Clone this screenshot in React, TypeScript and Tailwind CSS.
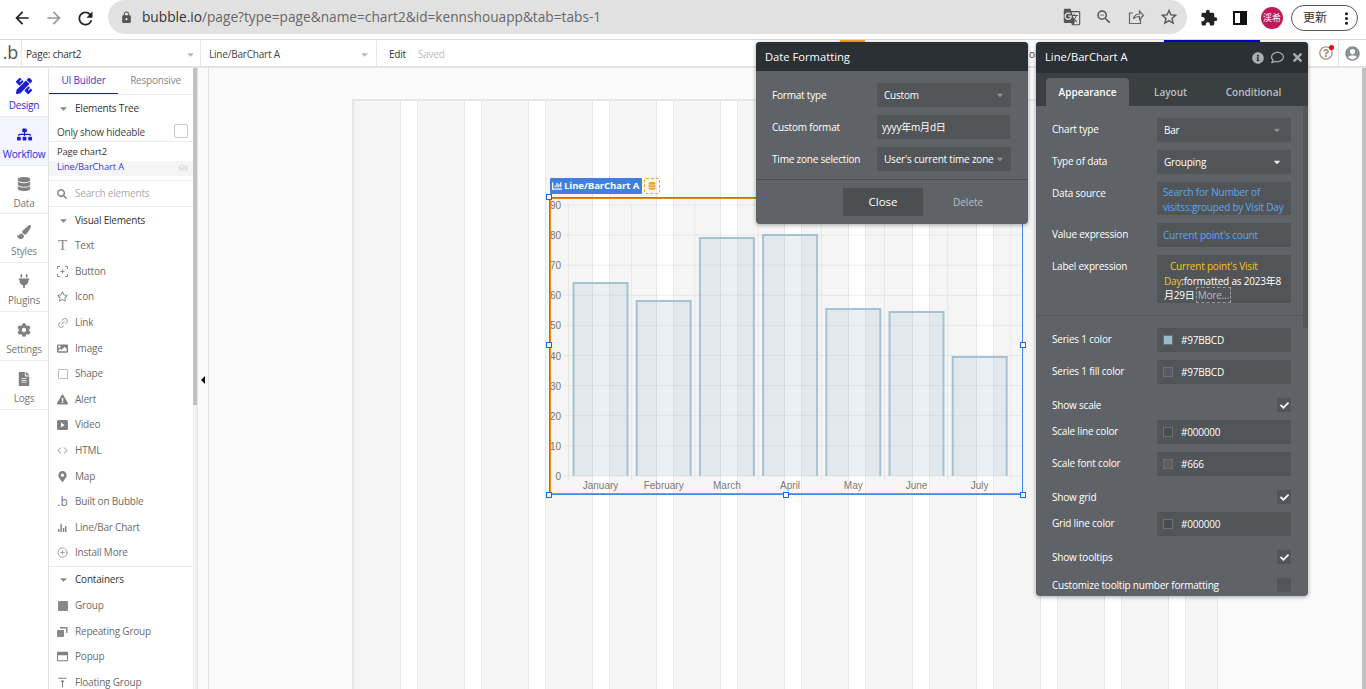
import React from 'react'
import {
  FaPencilRuler, FaSitemap, FaDatabase, FaPaintBrush, FaPlug, FaCog, FaFileAlt, FaCaretDown, FaSearch, FaEye,
  FaRegStar, FaImage, FaExclamationTriangle, FaMapMarkerAlt, FaInfoCircle, FaRegComment, FaTimes,
  FaCheck, FaRegQuestionCircle, FaUserCircle, FaChartBar, FaRegWindowMaximize,
} from 'react-icons/fa'
import { MdArrowBack, MdArrowForward, MdRefresh, MdLock, MdExtension, MdMoreVert, MdZoomOut, MdStarBorder, MdGTranslate, MdVerticalAlignTop } from 'react-icons/md'
import { Link2, CirclePlus, Code } from 'lucide-react'

const SANS = "font-['Open_Sans','Noto_Sans_CJK_JP',sans-serif]"

const navItems = [
  { label: 'Design', icon: <FaPencilRuler size={16} />, active: 'design' },
  { label: 'Workflow', icon: <FaSitemap size={15} />, active: 'workflow' },
  { label: 'Data', icon: <FaDatabase size={14} /> },
  { label: 'Styles', icon: <FaPaintBrush size={14} /> },
  { label: 'Plugins', icon: <FaPlug size={14} /> },
  { label: 'Settings', icon: <FaCog size={14} /> },
  { label: 'Logs', icon: <FaFileAlt size={14} /> },
]

function ButtonGlyph() {
  return (
    <svg width="11" height="11" viewBox="0 0 11 11" fill="none" stroke="#888" strokeWidth="1">
      <path d="M0.5 3V0.5H3M8 0.5h2.5V3M10.5 8v2.5H8M3 10.5H0.5V8M5.5 3.5v4M3.5 5.5h4" />
    </svg>
  )
}

function RepeatGlyph() {
  return (
    <svg width="11" height="11" viewBox="0 0 11 11" fill="#888">
      <rect x="0" y="4" width="7" height="7" rx="1" />
      <path d="M3 2.5V1h7.5v6H9V2.5z" />
    </svg>
  )
}

function VideoGlyph() {
  return (
    <svg width="11" height="10" viewBox="0 0 11 10">
      <rect width="11" height="10" rx="1.5" fill="#808080" />
      <path d="M4 2.5v5l3.500-2.500z" fill="white" />
    </svg>
  )
}

function TinyBars() {
  return (
    <svg width="9" height="9" viewBox="0 0 9 9" fill="#888">
      <rect x="0" y="6" width="1.5" height="3" />
      <rect x="2.4" y="1" width="1.5" height="8" />
      <rect x="4.8" y="5" width="1.5" height="4" />
      <rect x="7" y="3" width="1.5" height="6" />
    </svg>
  )
}

const visualElements = [
  { label: 'Text', icon: <span className="font-['Liberation_Serif',serif] text-[15px] leading-none text-[#888]">T</span> },
  { label: 'Button', icon: <ButtonGlyph /> },
  { label: 'Icon', icon: <FaRegStar size={11} color="#888" /> },
  { label: 'Link', icon: <Link2 size={12} color="#aaa" className="-rotate-45" /> },
  { label: 'Image', icon: <FaImage size={11} color="#808080" /> },
  { label: 'Shape', icon: <div className="h-2.5 w-2.5 rounded-[1px] border border-[#bbb]" /> },
  { label: 'Alert', icon: <FaExclamationTriangle size={11} color="#808080" /> },
  { label: 'Video', icon: <VideoGlyph /> },
  { label: 'HTML', icon: <Code size={11} color="#888" /> },
  { label: 'Map', icon: <FaMapMarkerAlt size={11} color="#808080" /> },
  { label: 'Built on Bubble', icon: <span className={`${SANS} text-[12px] leading-none text-[#777]`}>.b</span> },
  { label: 'Line/Bar Chart', icon: <TinyBars /> },
  { label: 'Install More', icon: <CirclePlus size={11} color="#999" /> },
]

const containers = [
  { label: 'Group', icon: <div className="h-2.5 w-2.5 rounded-[1px] bg-[#888]" /> },
  { label: 'Repeating Group', icon: <RepeatGlyph /> },
  { label: 'Popup', icon: <FaRegWindowMaximize size={11} color="#808080" /> },
  { label: 'Floating Group', icon: <MdVerticalAlignTop size={13} color="#808080" /> },
]

const bars = [
  { name: 'January', x: 573.5, top: 283 },
  { name: 'February', x: 636.7, top: 301 },
  { name: 'March', x: 699.9, top: 238 },
  { name: 'April', x: 763.1, top: 235 },
  { name: 'May', x: 826.3, top: 309 },
  { name: 'June', x: 889.5, top: 312 },
  { name: 'July', x: 952.7, top: 357 },
]

function PaletteItem({ label, icon }: { label: string; icon: React.ReactNode }) {
  return (
    <div className="flex h-[25.6px] items-center pl-[6px]">
      <div className="flex w-[15px] justify-center">{icon}</div>
      <span className="ml-[5px] text-[10px] tracking-[-0.2px] text-[#6b6b6b]">{label}</span>
    </div>
  )
}

function SectionHead({ label }: { label: string }) {
  return (
    <div className="flex h-[26px] items-center pl-[9px] text-[10px] tracking-[-0.2px] text-[#333]">
      <FaCaretDown size={11} color="#888" />
      <span className="ml-[6px]">{label}</span>
    </div>
  )
}

function Sidebar() {
  return (
    <div className="flex h-full shrink-0">
      <nav className="w-[49px] shrink-0 border-r border-[#dfe3e6] bg-white">
        {navItems.map((n) => (
          <div
            key={n.label}
            className={`flex h-[48.8px] flex-col items-center border-b border-[#e6ecef] pt-[9px] ${n.active === 'workflow' ? 'bg-[#f3f4fe]' : ''} ${n.active ? 'text-[#1b1bd6]' : 'text-[#808080]'}`}
          >
            <div className="flex h-[18px] items-center">{n.icon}</div>
            <span className={`mt-[3px] text-[10px] tracking-[-0.2px] ${n.active ? 'text-[#2a2ad8]' : 'text-[#777]'}`}>{n.label}</span>
          </div>
        ))}
      </nav>
      <div className="h-full w-[144px] shrink-0 overflow-hidden bg-white">
        <div className="flex h-[27px] border-b border-[#e6ecef] text-[10px] tracking-[-0.2px]">
          <div className="flex w-[69px] items-center justify-center border-b border-[#1b1bb8] text-[#3a3ad0]">UI Builder</div>
          <div className="flex flex-1 items-center justify-center pb-[2px] text-[#888]">Responsive</div>
        </div>
        <SectionHead label="Elements Tree" />
        <div className="flex h-[21px] items-center justify-between border-b border-[#e6ecef] pl-2 pr-[5px] text-[10px] tracking-[-0.2px] text-[#444]">
          <span className="pt-[2px]">Only show hideable</span>
          <div className="h-[14px] w-[14px] rounded-[2px] border border-[#ccc] bg-white" />
        </div>
        <div className="flex h-[17px] items-end pl-2 text-[9.4px] tracking-[-0.15px] text-[#333]">Page chart2</div>
        <div className="mt-[2px] flex h-[15px] items-center justify-between bg-[#f5f5f5] pb-[2px] pl-2 pr-[5px] text-[9.4px] tracking-[-0.15px] text-[#3a3ad0]">
          <span>Line/BarChart A</span>
          <FaEye size={10} color="#ddd" />
        </div>
        <div className="mt-[4px] flex h-[27px] items-center border-y border-[#e6ecef] pl-2 text-[10px] tracking-[-0.2px] text-[#aaa]">
          <FaSearch size={10} color="#888" />
          <span className="ml-[8px]">Search elements</span>
        </div>
        <SectionHead label="Visual Elements" />
        {visualElements.map((v) => (
          <PaletteItem key={v.label} label={v.label} icon={v.icon} />
        ))}
        <div className="border-t border-[#e3edf0]">
          <SectionHead label="Containers" />
        </div>
        {containers.map((v) => (
          <PaletteItem key={v.label} label={v.label} icon={v.icon} />
        ))}
      </div>
      <div className="h-full w-[4px] shrink-0 bg-[#f1f1f1]">
        <div className="h-[337px] w-full bg-[#c1c1c1]" />
      </div>
    </div>
  )
}

function ChromeBar() {
  return (
    <div className="flex h-10 items-center border-b border-[#d9dbdd] bg-white">
      <div className="flex w-[108px] items-center pl-[12px] pb-[3px] text-[#222]">
        <MdArrowBack size={20} />
        <MdArrowForward size={20} color="#9a9a9a" className="ml-[12px]" />
        <MdRefresh size={21} className="ml-[11px]" />
      </div>
      <div className="mb-[5px] flex h-[34px] w-[1079px] items-center rounded-full bg-[#e1e1e1] pl-[12px] pr-[8px]">
        <MdLock size={13} color="#555" />
        <span className={`${SANS} ml-[9px] pt-[1px] text-[13.7px] text-[#666]`}>
          <span className="text-[#333]">bubble.io</span>/page?type=page&amp;name=chart2&amp;id=kennshouapp&amp;tab=tabs-1
        </span>
        <div className="ml-auto flex items-center gap-[14px] text-[#555]">
          <MdGTranslate size={18} />
          <MdZoomOut size={18} />
          <svg width="18" height="18" viewBox="0 0 18 18" fill="none" stroke="#666" strokeWidth="1.2">
            <path d="M6 5H2.5v10.5h11V11" />
            <path d="M6.5 11c.5-3 2.500-5 6-5V3l4 4.500-4 4V8.500c-2.500 0-4.500.5-6 2.500z" />
          </svg>
          <MdStarBorder size={20} />
        </div>
      </div>
      <div className="mb-[3px] ml-[13px] flex items-center">
        <MdExtension size={18} color="#222" />
        <div className="ml-[15px] flex h-[14px] w-[14px] justify-end border-2 border-[#111]">
          <div className="h-full w-[5px] bg-[#111]" />
        </div>
        <div className={`${SANS} ml-[14px] flex h-[22px] w-[22px] items-center justify-center rounded-full bg-[#c2185b] text-[9px] text-white`}>渓希</div>
        <div className={`${SANS} ml-[8px] flex h-[26px] w-[67px] items-center justify-between rounded-full border border-[#555] pl-[11px] pr-[1px] text-[12px] text-[#333]`}>
          <span>更新</span>
          <MdMoreVert size={19} color="#222" />
        </div>
      </div>
    </div>
  )
}

function EditorBar() {
  return (
    <div className="flex h-[28px] items-center border-b-2 border-[#e3e3e3] bg-white text-[10px] tracking-[-0.2px] text-[#444]">
      <div className="flex h-full w-[22px] items-center justify-center border-r border-[#e8e8e8] pb-[2px] text-[18px] leading-none text-[#555]">.b</div>
      <div className="flex h-full w-[179px] items-center justify-between border-r border-[#e8e8e8] pl-[4px] pr-[4px] pt-[3px]">
        <span className="text-[#333]">Page: chart2</span>
        <FaCaretDown size={11} color="#bbb" />
      </div>
      <div className="flex h-full w-[176px] items-center justify-between border-r border-[#e8e8e8] pl-[8px] pr-[6px] pt-[3px]">
        <span>Line/BarChart A</span>
        <FaCaretDown size={11} color="#bbb" />
      </div>
      <span className="ml-[12px] pt-[3px] text-[#333]">Edit</span>
      <span className="ml-[12px] pt-[3px] text-[#bbb]">Saved</span>
      <div className="ml-auto flex h-full items-center">
        <div className="relative mr-[5px]">
          <FaRegQuestionCircle size={14} color="#a98f7f" />
          <div className="absolute -right-[1px] -top-[1px] h-[5px] w-[5px] rounded-full bg-[#f00000]" />
        </div>
        <div className="flex h-full w-[28px] items-center justify-center border-l border-[#e8e8e8]">
          <FaUserCircle size={15} color="#8a8f96" />
        </div>
      </div>
    </div>
  )
}

function BarChart() {
  const yLabels = [90, 80, 70, 60, 50, 40, 30, 20, 10, 0]
  return (
    <svg viewBox="549 197 474 297" className="absolute -left-px -top-px h-[297px] w-[474px]">
      {yLabels.map((v, i) => {
        const y = 205 + i * 30.1
        return (
          <g key={v}>
            <line x1="564" x2="1022" y1={y} y2={y} stroke="#000" strokeOpacity="0.06" />
            <text x="561" y={y + 4} textAnchor="end" fontFamily="Liberation Sans" fontSize="10" fill="#777">{v}</text>
          </g>
        )
      })}
      {Array.from({ length: 8 }).map((_, i) => (
        <line key={i} x1={568.500 + i * 63.2} x2={568.500 + i * 63.2} y1="205" y2="481" stroke="#000" strokeOpacity="0.06" />
      ))}
      {bars.map((b) => (
        <g key={b.name}>
          <rect x={b.x} y={b.top} width="54" height={476 - b.top} fill="#97BBCD" fillOpacity="0.2" />
          <path d={`M${b.x} 476V${b.top}H${b.x + 54}V476`} fill="none" stroke="#97BBCD" strokeOpacity="0.85" strokeWidth="2" />
        </g>
      ))}
      {bars.map((b) => (
        <text key={b.name} x={b.x + 27} y="488.5" textAnchor="middle" fontFamily="Liberation Sans" fontSize="10" fill="#777">{b.name}</text>
      ))}
    </svg>
  )
}

function Handle({ className }: { className: string }) {
  return <div className={`absolute h-[6px] w-[6px] border border-[#1268e8] bg-white ${className}`} />
}

function ChartElement() {
  return (
    <div className="absolute left-[196px] top-[96px] h-[298px] w-[474px] border border-[#3b8de8]">
      <BarChart />
      <div className="absolute inset-0 border-y border-l border-[#e8850c]" />
      <Handle className="-left-[4px] -top-[4px]" />
      <Handle className="-left-[4px] top-[144px]" />
      <Handle className="-bottom-[4px] -left-[4px]" />
      <Handle className="-bottom-[4px] left-[233px]" />
      <Handle className="-bottom-[4px] -right-[4px]" />
      <Handle className="-right-[4px] top-[144px]" />
      <div className="absolute -top-[20px] left-0 flex items-center gap-[2px]">
        <div className="flex h-4 w-[92px] items-center gap-[2px] rounded-[1px] bg-[#3f7fe0] pl-[2px] text-[9.6px] font-bold tracking-[-0.1px] whitespace-nowrap text-white">
          <FaChartBar size={10} />
          <span>Line/BarChart A</span>
        </div>
        <div className="flex h-4 w-4 items-center justify-center rounded-[2px] border border-dashed border-[#f5a623]">
          <FaDatabase size={8} color="#f5a623" />
        </div>
      </div>
    </div>
  )
}

function Canvas() {
  return (
    <div className="relative h-full flex-1 overflow-hidden">
      <div className="flex h-full border-l border-[#e3e3e3] bg-[#fafafa]">
        <div className="relative h-full w-[11px] shrink-0 border-r border-[#e3e3e3]">
          <div className="absolute left-[3px] top-[308px] h-0 w-0 border-y-[4px] border-r-[4px] border-y-transparent border-r-[#111]" />
        </div>
        <div className="min-w-0 flex-1 pl-[143px] pt-[31px]">
          <div className="relative h-[700px] w-[866px] overflow-hidden border-x border-t-2 border-[#e6e6e6] bg-white">
            <div className="flex h-full gap-[16px]">
              {Array.from({ length: 14 }).map((_, i) => (
                <div key={i} className="h-full w-[48px] shrink-0 border-x border-[#e6e6e6] bg-[#f5f5f5]" />
              ))}
            </div>
            <ChartElement />
          </div>
        </div>
      </div>
    </div>
  )
}

function FieldLabel({ children }: { children: React.ReactNode }) {
  return <div className="text-[10px] leading-[22px] tracking-[-0.2px] text-white">{children}</div>
}

function Select({ value, bright, className }: { value: string; bright?: boolean; className?: string }) {
  return (
    <div className={`flex h-6 items-center justify-between bg-[#515558] pl-[7px] pr-[9px] text-[10px] tracking-[-0.2px] text-white ${className ?? ''}`}>
      <span className="whitespace-nowrap">{value}</span>
      <FaCaretDown size={10} color={bright ? '#e8e8e8' : '#8c9094'} className="shrink-0" />
    </div>
  )
}

function Row({ label, children }: { label: string; children: React.ReactNode }) {
  return (
    <div className="flex items-start pl-4">
      <div className="w-[105px] shrink-0"><FieldLabel>{label}</FieldLabel></div>
      <div className="w-[134px]">{children}</div>
    </div>
  )
}

function ColorRow({ label, value, swatch }: { label: string; value: string; swatch: string }) {
  return (
    <Row label={label}>
      <div className="flex h-6 items-center bg-[#515558] pl-[6px] text-[10px] tracking-[-0.2px] text-white">
        <div className={`h-[10px] w-[10px] border border-[#6d7175] ${swatch}`} />
        <span className="ml-[8px]">{value}</span>
      </div>
    </Row>
  )
}

function CheckRow({ label, checked, className }: { label: string; checked?: boolean; className: string }) {
  return (
    <div className={`flex h-[14px] items-center justify-between pl-4 pr-[17px] text-[10px] tracking-[-0.2px] text-white ${className}`}>
      <span>{label}</span>
      <div className="flex h-[14px] w-[14px] items-center justify-center bg-[#515558]">
        {checked && <FaCheck size={9} color="white" />}
      </div>
    </div>
  )
}

function DateFormatPopup() {
  return (
    <div className="absolute left-[756px] top-[42px] z-10 h-[182px] w-[272px] overflow-hidden rounded-[4px] bg-[#5f6367] shadow-[0_1px_4px_rgba(0,0,0,0.35)]">
      <div className="flex h-[29px] items-center bg-[#2a3033] pl-[9px] pt-[1px] text-[11.2px] text-white">Date Formatting</div>
      <div className="flex flex-col gap-2 pl-4 pt-3">
        {[
          { label: 'Format type', value: 'Custom', select: true },
          { label: 'Custom format', value: 'yyyy年m月d日', select: false },
          { label: 'Time zone selection', value: "User's current time zone", select: true },
        ].map((r) => (
          <div key={r.label} className="flex items-center">
            <span className="w-[105px] shrink-0 text-[10px] tracking-[-0.2px] text-white">{r.label}</span>
            {r.select ? (
              <Select value={r.value} className="w-[134px] !pr-[6px]" />
            ) : (
              <div className="flex h-6 w-[133px] items-center bg-[#515558] pl-[5px] text-[10px] tracking-[-0.2px] text-white">{r.value}</div>
            )}
          </div>
        ))}
      </div>
      <div className="mt-2 flex items-center border-t border-[#4a4e51] pl-[87px] pt-2">
        <div className="flex h-7 w-[80px] items-center justify-center bg-[#4b4f52] text-[11.5px] text-white">Close</div>
        <span className="ml-[30px] text-[10px] text-[#bcbfc2]">Delete</span>
      </div>
    </div>
  )
}

function PropertyEditor() {
  return (
    <div className="absolute left-[1036px] top-[42px] z-10 h-[554px] w-[272px] overflow-hidden rounded-[4px] bg-[#5f6367] shadow-[0_1px_4px_rgba(0,0,0,0.35)]">
      <div className="flex h-[31px] items-center justify-between bg-[#2a3033] pl-[9px] pr-[4px]">
        <span className="text-[11.2px] text-white">Line/BarChart A</span>
        <div className="flex items-center gap-[7px] text-[#a9adb0]">
          <FaInfoCircle size={12} />
          <FaRegComment size={13} />
          <FaTimes size={13} />
        </div>
      </div>
      <div className="flex h-[33px] items-end bg-[#3a3f42] pl-[10px] text-[10px] font-semibold">
        <div className="flex h-[28px] w-[83px] items-center justify-center rounded-t-[4px] bg-[#5f6367] text-white">Appearance</div>
        <div className="flex h-[28px] w-[83px] items-center justify-center text-[#bcbfc2]">Layout</div>
        <div className="flex h-[28px] w-[83px] items-center justify-center text-[#bcbfc2]">Conditional</div>
      </div>
      <div className="absolute right-0 top-[64px] h-[222px] w-[5px] bg-[#53575a]" />
      <div className="flex flex-col gap-2 pt-3">
        <Row label="Chart type"><Select value="Bar" /></Row>
        <Row label="Type of data"><Select value="Grouping" bright /></Row>
        <Row label="Data source">
          <div className="h-[33px] overflow-hidden whitespace-nowrap bg-[#515558] pl-[6px] pt-[3px] text-[10px] leading-[15px] tracking-[-0.2px] text-[#5da5f5]">
            Search for Number of<br />visitss:grouped by Visit Day
          </div>
        </Row>
        <Row label="Value expression">
          <div className="flex h-6 items-center bg-[#515558] pl-[6px] text-[10px] tracking-[-0.2px] text-[#5da5f5]">Current point's count</div>
        </Row>
        <Row label="Label expression">
          <div className="h-12 overflow-hidden whitespace-nowrap bg-[#515558] pl-[7px] pt-[4px] text-[10px] leading-[14.7px] tracking-[-0.2px] text-white">
            <span className="ml-[6px] text-[#f5c518]">Current point's Visit</span><br />
            <span className="text-[#f5c518]">Day</span>:formatted as 2023年8<br />
            月29日<span className="ml-[1px] border border-dashed border-[#9a9da0] px-[1px] text-[#b9bcbf]">More...</span>
          </div>
        </Row>
      </div>
      <div className="mt-3 flex flex-col gap-2 border-t border-[#53575a] pt-3">
        <ColorRow label="Series 1 color" value="#97BBCD" swatch="bg-[#97bbcd]" />
        <ColorRow label="Series 1 fill color" value="#97BBCD" swatch="bg-[#565c60]" />
      </div>
      <CheckRow label="Show scale" checked className="mt-[14px]" />
      <div className="mt-2 flex flex-col gap-2">
        <ColorRow label="Scale line color" value="#000000" swatch="bg-[#484b4e]" />
        <ColorRow label="Scale font color" value="#666" swatch="bg-[#5f5f5f]" />
      </div>
      <CheckRow label="Show grid" checked className="mt-[14px]" />
      <div className="mt-2">
        <ColorRow label="Grid line color" value="#000000" swatch="bg-[#484b4e]" />
      </div>
      <CheckRow label="Show tooltips" checked className="mt-[14px]" />
      <CheckRow label="Customize tooltip number formatting" className="mt-[14px]" />
    </div>
  )
}

export default function App() {
  return (
    <div className={`${SANS} relative flex h-[689px] w-[1366px] flex-col overflow-hidden bg-white`}>
      <ChromeBar />
      <EditorBar />
      <div className="flex min-h-0 flex-1">
        <Sidebar />
        <Canvas />
        <div className="h-full w-[4px] shrink-0 bg-[#c1c1c1]" />
      </div>
      <div className="absolute left-[840px] top-[40px] h-[2px] w-[25px] bg-[#f5a623]" />
      <div className="absolute left-[1164px] top-[40px] h-[2px] w-[96px] bg-[#0000cc]" />
      <span className="absolute left-[1029px] top-[47px] text-[10px] text-[#444]">ol</span>
      <DateFormatPopup />
      <PropertyEditor />
    </div>
  )
}
